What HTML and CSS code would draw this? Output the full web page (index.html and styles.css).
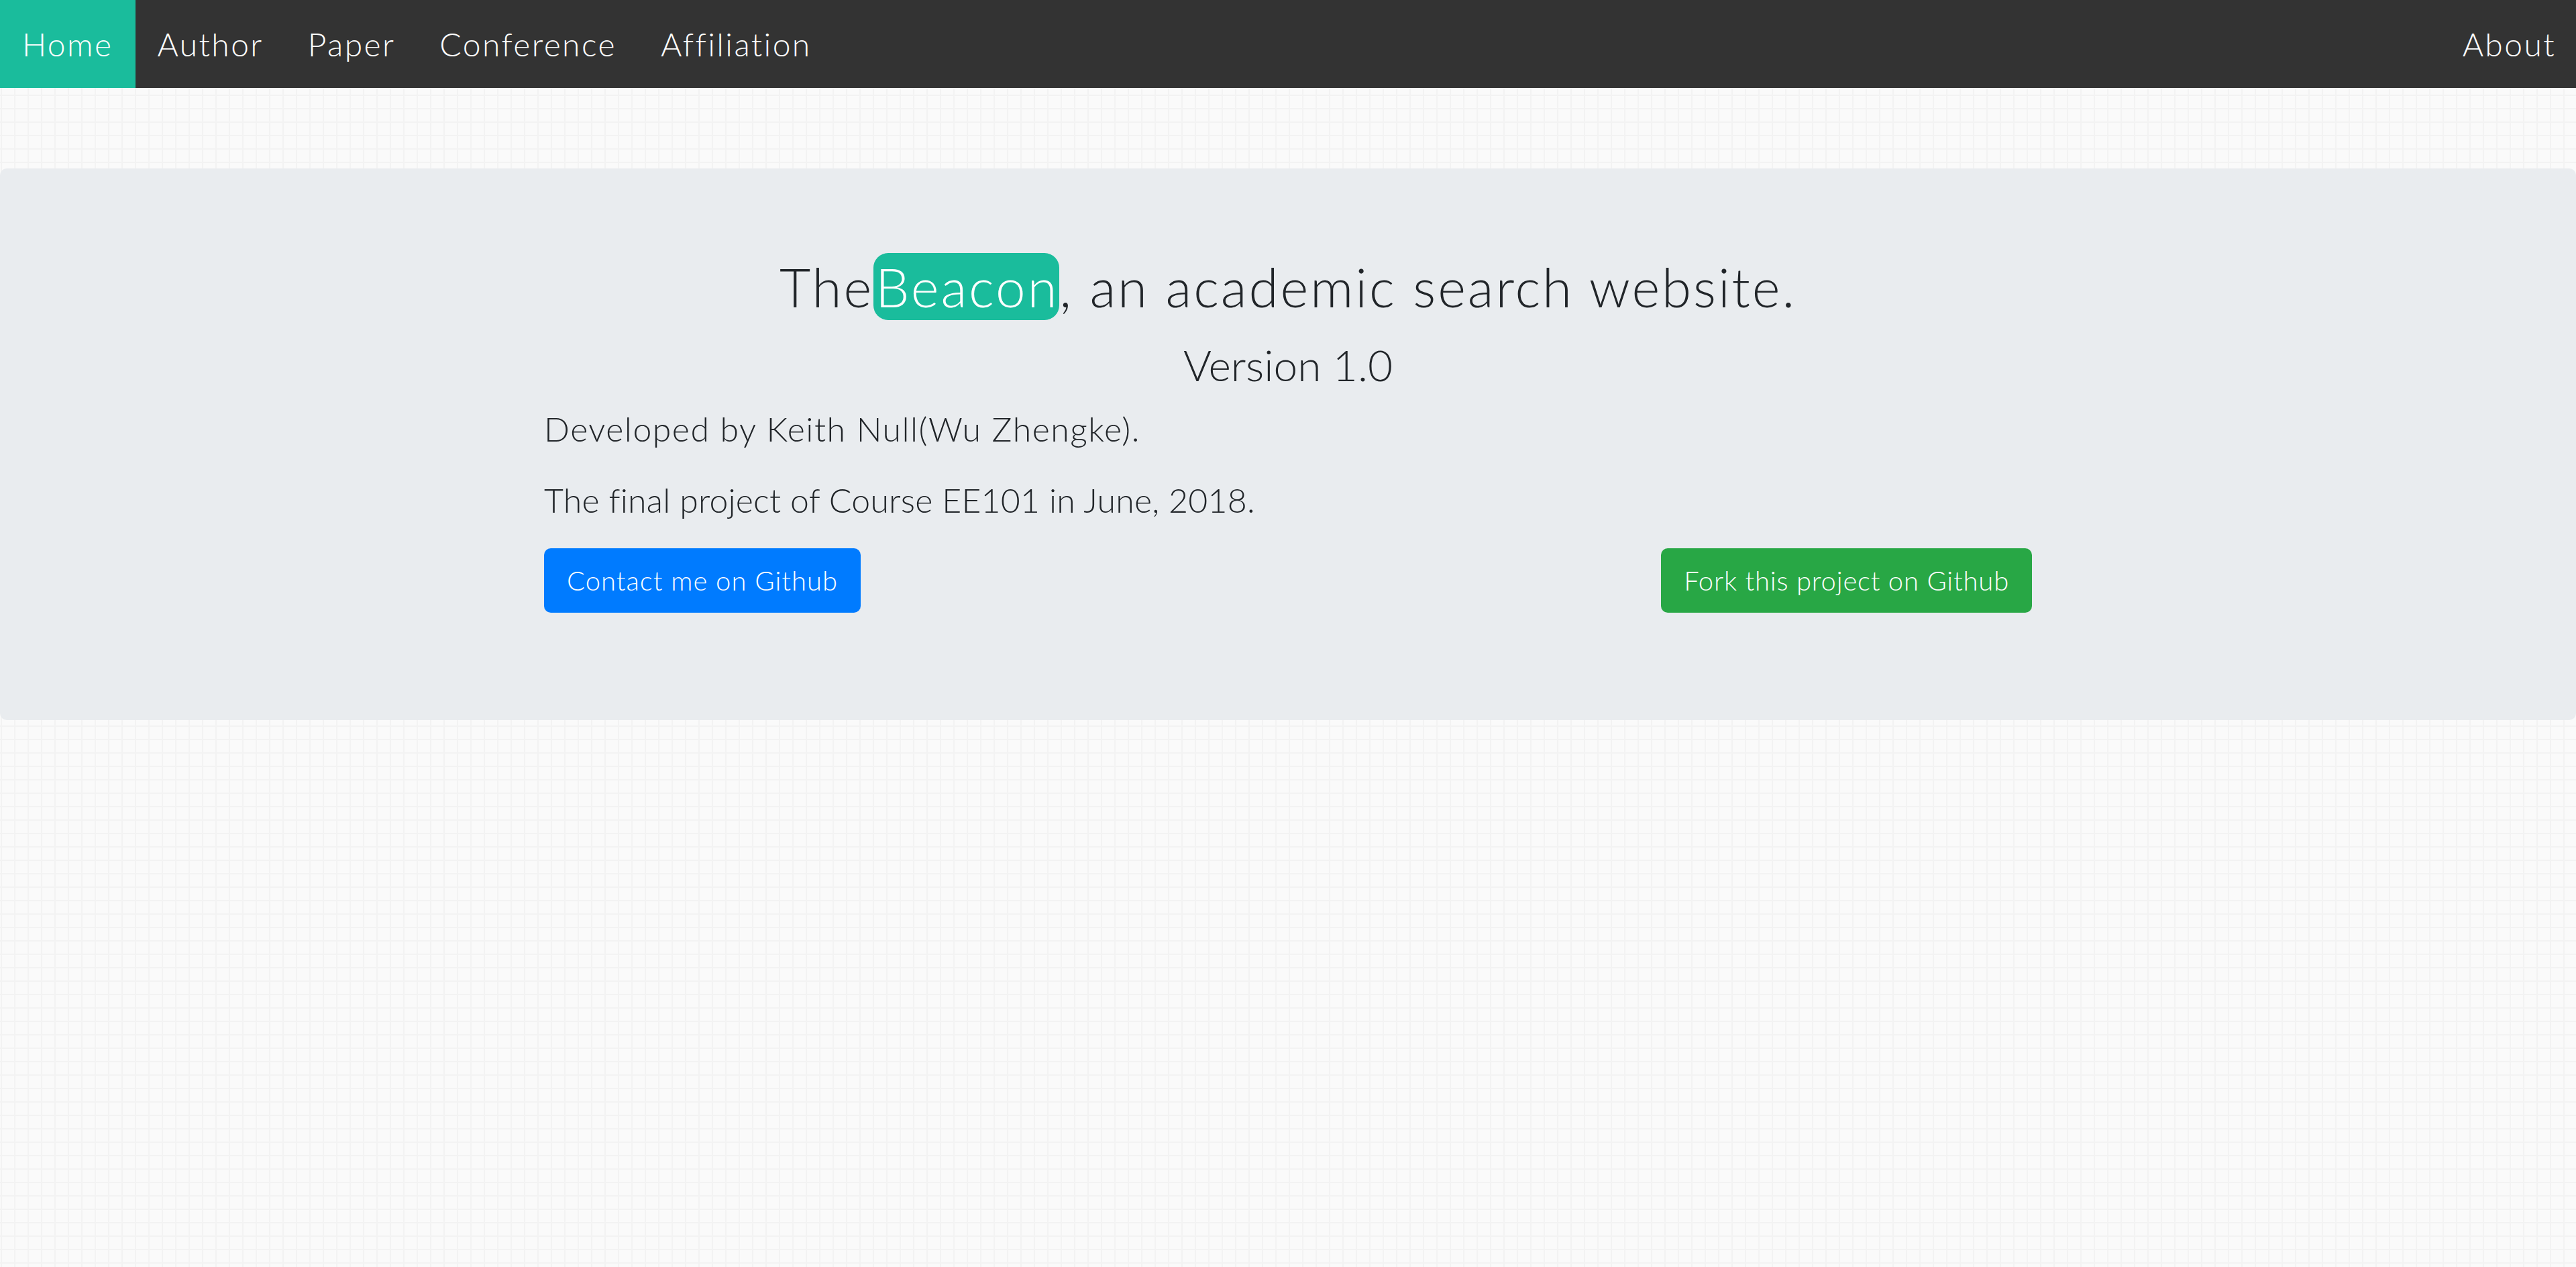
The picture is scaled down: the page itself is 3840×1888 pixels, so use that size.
FILE: index.html
```html
<!DOCTYPE html>
<html lang="en">
<head>
<meta charset="utf-8">
<title>TheBeacon</title>
<link rel="stylesheet" href="styles.css">
</head>
<body>
<nav class="topnav">
  <a class="nav-link active" href="#">Home</a>
  <a class="nav-link" href="#">Author</a>
  <a class="nav-link" href="#">Paper</a>
  <a class="nav-link" href="#">Conference</a>
  <a class="nav-link" href="#">Affiliation</a>
  <a class="nav-link nav-right" href="#">About</a>
</nav>
<main class="page">
  <section class="jumbotron">
    <div class="container">
      <h1 class="title">The<span class="brand">Beacon</span>, an academic search website.</h1>
      <h3 class="version">Version 1.0</h3>
      <p class="lead lead-wide">Developed by Keith Null(Wu Zhengke).</p>
      <p class="lead">The final project of Course EE101 in June, 2018.</p>
      <div class="actions">
        <a class="btn btn-primary" href="#">Contact me on Github</a>
        <a class="btn btn-success" href="#">Fork this project on Github</a>
      </div>
    </div>
  </section>
</main>
</body>
</html>
```
FILE: styles.css
```css
* { box-sizing: border-box; }
html, body { margin: 0; padding: 0; }
body {
  font-family: "Lato", "Liberation Sans", sans-serif;
  font-weight: 300;
  color: #212529;
  min-height: 1888px;
  background-color: #fafafa;
  background-image:
    linear-gradient(to right, #f3f3f3 2px, transparent 2px),
    linear-gradient(to bottom, #f3f3f3 2px, transparent 2px);
  background-size: 20px 20px;
  background-position: 1px 1px;
}
.topnav {
  display: flex;
  height: 131px;
  background: #333333;
}
.nav-link {
  display: flex;
  align-items: center;
  padding: 0 33px;
  font-size: 48px;
  letter-spacing: 2.4px;
  line-height: 131px;
  color: #ffffff;
  text-decoration: none;
}
.nav-link.active { background: #1abc9c; }
.nav-right { margin-left: auto; padding-right: 30px; }
.page { padding-top: 120px; }
.jumbotron {
  background: #e9ecef;
  border-radius: 10px;
  height: 822px;
  padding-top: 126px;
}
.container {
  width: 2218px;
  margin: 0 auto;
}
.title {
  margin: 0;
  text-align: center;
  font-size: 80px;
  font-weight: 300;
  letter-spacing: 2.9px;
  line-height: 100px;
}
.brand {
  display: inline-block;
  padding: 0 1px 0 3px;
  background: #1abc9c;
  color: #ffffff;
  border-radius: 22px;
}
.version {
  margin: 28px 0 0;
  text-align: center;
  font-size: 64px;
  font-weight: 300;
  line-height: 77px;
}
.lead {
  margin: 20px 0 0;
  font-size: 50px;
  line-height: 75px;
  letter-spacing: 0.2px;
}
.lead-wide { letter-spacing: 1.5px; }
.lead + .lead { margin-top: 31px; }
.actions {
  display: flex;
  justify-content: space-between;
  margin-top: 34px;
}
.btn {
  display: inline-flex;
  align-items: center;
  height: 96px;
  padding: 0 34px;
  border-radius: 10px;
  font-size: 40px;
  letter-spacing: 1px;
  color: #ffffff;
  text-decoration: none;
}
.btn-primary { background: #007bff; }
.btn-success { background: #28a745; letter-spacing: 0.8px; }
```
